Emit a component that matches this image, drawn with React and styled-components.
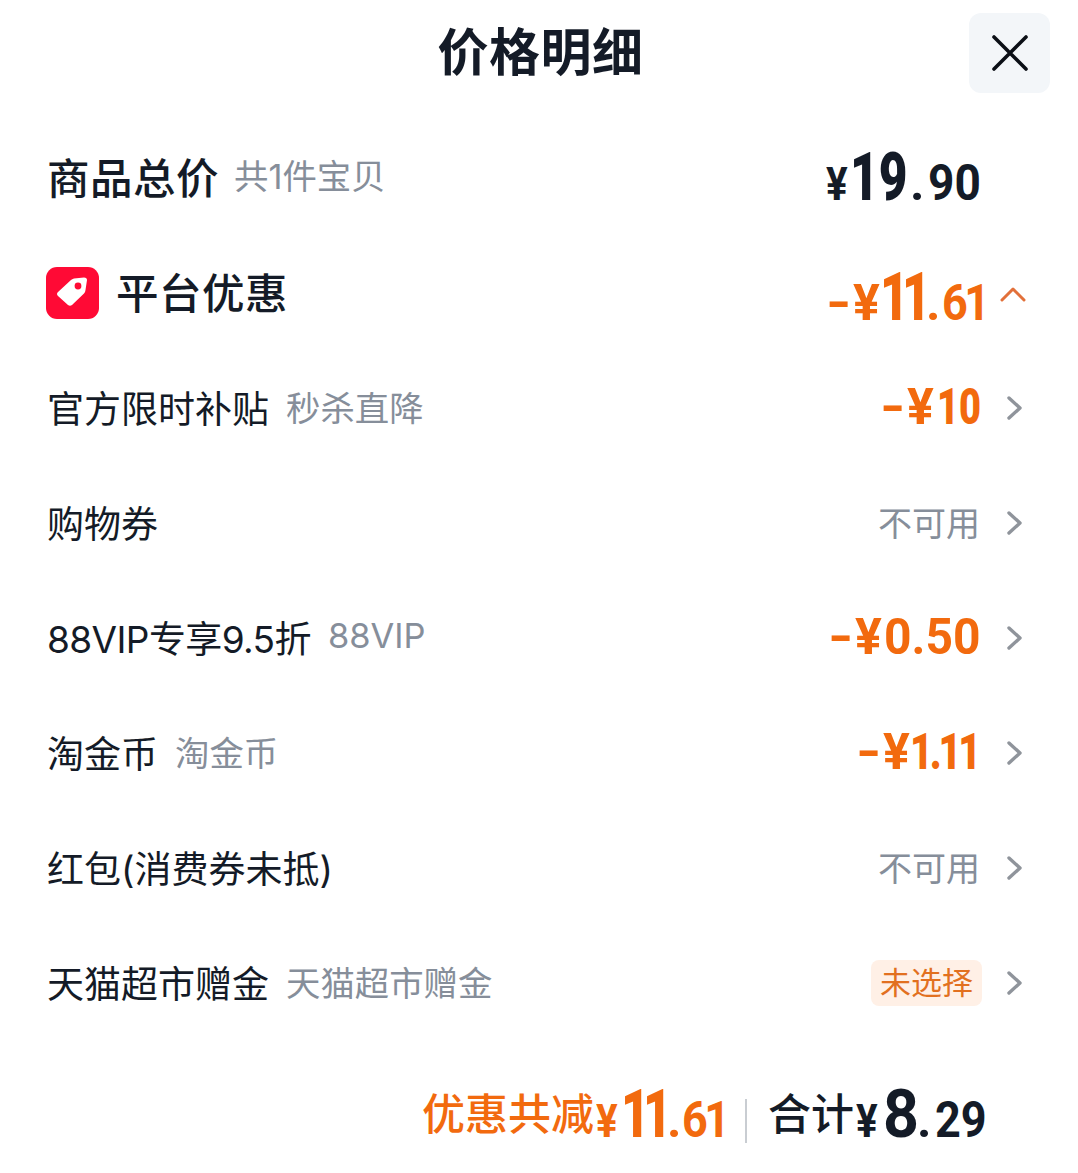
import styled, { createGlobalStyle } from "styled-components";

const Global = createGlobalStyle`
    html, body {
        margin: 0;
        padding: 0;
        background: #fff;
    }
    body {
        font-family: "Inter", "Noto Sans CJK SC", sans-serif;
    }
`

const Page = styled.div`
    width: 1078px;
    height: 1173px;
    overflow: hidden;
    color: #141b27;
`

const Header = styled.div`
    display: grid;
    grid-template-columns: 1fr auto 1fr;
    align-items: center;
    height: 80px;
    padding: 13px 28px 0 47px;
`

const Title = styled.h1`
    grid-column: 2;
    margin: 0;
    font-size: 51px;
    line-height: 72px;
    font-weight: 700;
    letter-spacing: 0.5px;
    transform: translateX(-8px);
`

const CloseButton = styled.button`
    grid-column: 3;
    justify-self: end;
    width: 81px;
    height: 80px;
    border: 0;
    border-radius: 12px;
    background: #f3f6f9;
    display: flex;
    align-items: center;
    justify-content: center;
    padding: 0;
`

const Rows = styled.div`
    display: flex;
    flex-direction: column;
    padding: 27px 0 0 47px;
`

const Row = styled.div`
    display: flex;
    align-items: center;
    justify-content: space-between;
    height: 115px;
    padding-right: 98px;
`

const Left = styled.div`
    display: flex;
    align-items: center;
`

const Label = styled.span`
    font-size: ${p => (p.$big ? "42.5px" : "37px")};
    font-weight: ${p => (p.$big ? 500 : 400)};
    letter-spacing: ${p => (p.$big ? "0.5px" : p.$tight ? "-0.6px" : "0")};
    white-space: nowrap;
    padding-bottom: ${p => (p.$big ? "5px" : "1px")};
`

const Note = styled.span`
    font-size: 34.4px;
    color: #868e9a;
    margin-left: ${p => (p.$high ? "15px" : "17px")};
    white-space: nowrap;
    padding-bottom: ${p => (p.$high ? "8px" : "4px")};
`

const TagIcon = styled.svg`
    display: block;
    margin: 0 17px 0 -1px;
`

const Right = styled.div`
    display: flex;
    align-items: center;
    position: relative;
`

const Amount = styled.span`
    display: inline-flex;
    align-items: baseline;
    font-family: "Roboto", sans-serif;
    color: ${p => (p.$dark ? "#141b27" : "#f26a0e")};
    white-space: nowrap;
    line-height: 1;
`

const Part = styled.span`
    display: inline-block;
    font-size: ${p => p.$size}px;
    font-weight: ${p => (p.$sx && p.$sx < 0.8 ? 900 : 700)};
    width: ${p => p.$w}px;
    letter-spacing: ${p => p.$ls || 0}px;
    transform: scaleX(${p => p.$sx || 1});
    transform-origin: left center;
`

const Muted = styled.span`
    font-size: 34px;
    color: #868e9a;
    padding-bottom: 2px;
`

const Badge = styled.span`
    font-size: 31px;
    line-height: 46px;
    color: #e2701f;
    background: #fff0e6;
    border-radius: 8px;
    padding: 0 9px;
    margin-right: -2px;
`

const ChevronIcon = styled.svg`
    position: absolute;
    left: 100%;
    margin-left: 26px;
    top: 50%;
    transform: translateY(-50%);
`

const CaretIcon = styled.svg`
    position: absolute;
    left: 100%;
    margin-left: 20px;
    top: 31px;
`

const PriceBox = styled.div`
    padding-top: ${p => p.$top || 0}px;
    padding-bottom: ${p => p.$bottom || 0}px;
    margin-right: ${p => p.$right || 0}px;
`

const Footer = styled.div`
    display: flex;
    justify-content: flex-end;
    align-items: center;
    padding: 34px 93px 0 0;
`

const FooterText = styled.span`
    font-size: 43px;
    font-weight: 500;
    white-space: nowrap;
    padding-right: 2px;
    color: ${p => (p.$dark ? "#141b27" : "#f26a0e")};
`

const Divider = styled.div`
    width: 2px;
    height: 44px;
    background: #c9cdd2;
    margin: 20px 21px 0 20px;
`

const Chevron = () => (
    <ChevronIcon width="18" height="26" viewBox="0 0 18 26">
        <path d="M3 3 L14 13 L3 23" fill="none" stroke="#8f949b" strokeWidth="3.4" strokeLinecap="round" strokeLinejoin="round" />
    </ChevronIcon>
)

const Price = ({ parts, dark }) => (
    <Amount $dark={dark}>
        {parts.map(([text, size, w, sx, ls]) => (
            <Part key={text} $size={size} $w={w} $sx={sx} $ls={ls}>{text}</Part>
        ))}
    </Amount>
)

// [text, font size, slot width, horizontal scale, letter spacing]
const minus = ["-", 50, 27, 1.3]
const yen = w => ["¥", 50, w, 1]
const smallYen = w => ["¥", 46, w, 0.88]

const rows = [
    { label: "官方限时补贴", note: "秒杀直降", parts: [minus, yen(30), ["10", 50, 43, 0.76]] },
    { label: "购物券", muted: "不可用" },
    { label: "88VIP专享9.5折", tight: true, note: "88VIP", parts: [minus, yen(29), ["0.50", 50, 96, 0.96]] },
    { label: "淘金币", note: "淘金币", parts: [minus, yen(27), ["1.11", 50, 70, 0.79, -4]] },
    { label: "红包(消费券未抵)", muted: "不可用" },
    { label: "天猫超市赠金", note: "天猫超市赠金", badge: "未选择" },
]

export default function App() {
    return (
        <Page>
            <Global />
            <Header>
                <Title>价格明细</Title>
                <CloseButton>
                    <svg width="38" height="38" viewBox="0 0 38 38">
                        <path d="M3 3 L35 35 M35 3 L3 35" fill="none" stroke="#0b0f16" strokeWidth="3.6" strokeLinecap="round" />
                    </svg>
                </CloseButton>
            </Header>
            <Rows>
                <Row>
                    <Left>
                        <Label $big>商品总价</Label>
                        <Note $high>共1件宝贝</Note>
                    </Left>
                    <Right>
                        <Price dark parts={[smallYen(24), ["19", 66, 60, 0.75], [".", 50, 18], ["90", 50, 52, 0.92]]} />
                    </Right>
                </Row>
                <Row>
                    <Left>
                        <TagIcon width="53" height="52" viewBox="0 0 53 52">
                            <rect width="53" height="52" rx="11" fill="#ff0a35" />
                            <path d="M25 13 Q26 12 28 11.5 L38 10.5 Q41 10.5 41 13 L39.5 23 Q39.3 25 38 26.5 L26 38 Q24 39.5 22 38 L12 29 Q10 27 12 25 Z" fill="#fff" />
                            <circle cx="32" cy="19" r="3.4" fill="#ff0a35" />
                        </TagIcon>
                        <Label $big>平台优惠</Label>
                    </Left>
                    <Right>
                        <PriceBox $top={10} $right={-3}>
                            <Price parts={[minus, yen(27), ["11", 66, 46, 0.75, -9], [".", 50, 16], ["61", 50, 41, 0.9, -4]]} />
                        </PriceBox>
                        <CaretIcon width="26" height="16" viewBox="0 0 26 16">
                            <path d="M2 14 L13 3 L24 14" fill="none" stroke="#e2703a" strokeWidth="3" strokeLinecap="round" strokeLinejoin="round" />
                        </CaretIcon>
                    </Right>
                </Row>
                {rows.map(row => (
                    <Row key={row.label}>
                        <Left>
                            <Label $tight={row.tight}>{row.label}</Label>
                            {row.note && <Note>{row.note}</Note>}
                        </Left>
                        <Right>
                            {row.parts && (
                                <PriceBox $bottom={1}>
                                    <Price parts={row.parts} />
                                </PriceBox>
                            )}
                            {row.muted && <Muted>{row.muted}</Muted>}
                            {row.badge && <Badge>{row.badge}</Badge>}
                            <Chevron />
                        </Right>
                    </Row>
                ))}
            </Rows>
            <Footer>
                <FooterText>优惠共减</FooterText>
                <PriceBox $top={8}>
                    <Price parts={[smallYen(25), ["11", 66, 46, 0.75, -9], [".", 50, 15], ["61", 50, 43, 0.9, -4]]} />
                </PriceBox>
                <Divider />
                <FooterText $dark>合计</FooterText>
                <PriceBox $top={8}>
                    <Price dark parts={[smallYen(27), ["8", 66, 34, 0.95], [".", 50, 18], ["29", 50, 50, 0.9]]} />
                </PriceBox>
            </Footer>
        </Page>
    )
}
